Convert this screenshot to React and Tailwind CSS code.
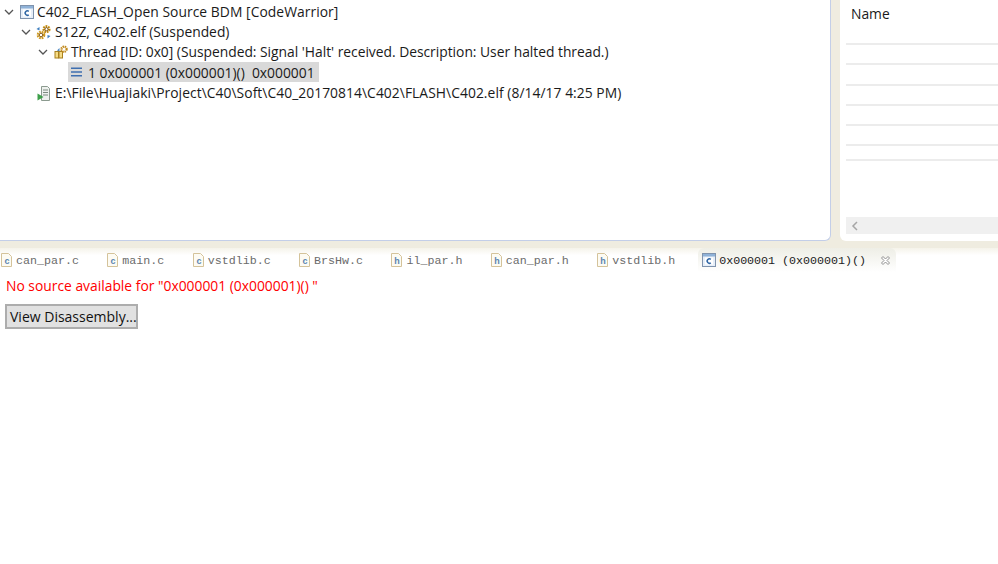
const sans = "font-['Open_Sans','Noto_Sans',sans-serif]";

const Chevron = () => (
  <svg width="10" height="10" viewBox="0 0 10 10" className="shrink-0">
    <path d="M1 3l4 4 4-4" fill="none" stroke="#555" strokeWidth="1.3" />
  </svg>
);

const ProjectIcon = () => (
  <svg width="14" height="14" viewBox="0 0 14 14" className="shrink-0">
    <rect x="0.5" y="0.5" width="13" height="13" fill="#e6eef8" stroke="#7f93ad" />
    <rect x="1" y="1" width="12" height="2.5" fill="#8fb2d8" />
    <rect x="3" y="4.5" width="8" height="7" fill="#fff" />
    <path d="M8.8 6.4A2.2 2.2 0 1 0 8.8 9.8" fill="none" stroke="#2f66a5" strokeWidth="1.5" />
  </svg>
);

const Gear = ({ cx, cy, r }) => (
  <g>
    <circle cx={cx} cy={cy} r={r} fill="none" stroke="#cf9a1e" strokeWidth="2.6" strokeDasharray="1.6 0.8" />
    <circle cx={cx} cy={cy} r={r - 1.2} fill="none" stroke="#7a4f10" strokeWidth="0.9" />
    <circle cx={cx} cy={cy} r={r + 1} fill="none" stroke="#7a4f10" strokeWidth="0.5" strokeDasharray="1.2 1.2" />
  </g>
);

const GearsIcon = () => (
  <svg width="15" height="15" viewBox="0 0 15 15" className="shrink-0 ml-[-1px] mr-px">
    <Gear cx="10.5" cy="4.2" r="2.8" />
    <Gear cx="5" cy="10" r="3" />
    <path d="M.5 4l3-2v3.5zM14.5 11l-3 2.5V10z" fill="#3f7fbf" />
  </svg>
);

const ThreadIcon = () => (
  <svg width="14" height="14" viewBox="0 0 14 14" className="shrink-0">
    <rect x="1" y="6.5" width="3.5" height="6.5" fill="#f6dc86" stroke="#a8801f" />
    <rect x="5" y="6.5" width="3.5" height="6.5" fill="#f6dc86" stroke="#a8801f" />
    <circle cx="10" cy="4.2" r="2.6" fill="none" stroke="#c0881a" strokeWidth="2.2" strokeDasharray="1.4 0.7" />
    <path d="M3 5.5l2.5-2.5v3.5z" fill="#4a86c0" />
  </svg>
);

const FrameIcon = () => (
  <svg width="11" height="10" viewBox="0 0 11 10" className="shrink-0">
    <path d="M0 1.2h11M0 5h11M0 8.8h11" stroke="#3f6fb0" strokeWidth="1.6" />
  </svg>
);

const ElfIcon = () => (
  <svg width="13" height="15" viewBox="0 0 13 15" className="shrink-0">
    <path d="M4.5.5h6l2 2v12h-8z" fill="#eef1ee" stroke="#8b9a8f" />
    <path d="M6 4h5M6 6.5h5M6 9h5" stroke="#7c8a80" />
    <path d="M0.5 7.5l6 3.5-6 3.5z" fill="#3ea04a" />
  </svg>
);

const FileIcon = ({ letter }) => (
  <svg width="11" height="14" viewBox="0 0 11 14" className="shrink-0">
    <path d="M.5.5h7l3 3v10H.5z" fill="#fdfbf3" stroke="#d4c39a" />
    <text x="6" y="10.5" textAnchor="middle" fontSize="9" fontWeight="700" fill="#5b84b1" fontFamily="'Liberation Sans', sans-serif">
      {letter}
    </text>
  </svg>
);

const tabs = [
  ['can_par.c', 'c'],
  ['main.c', 'c'],
  ['vstdlib.c', 'c'],
  ['BrsHw.c', 'c'],
  ['il_par.h', 'h'],
  ['can_par.h', 'h'],
  ['vstdlib.h', 'h'],
];

const lineGaps = ['h-[45px]', 'h-[20px]', 'h-[21px]', 'h-[20px]', 'h-[20px]', 'h-[20px]', 'h-[15px]'];

const App = () => {
  return (
    <div className={`w-[998px] h-[564px] overflow-hidden bg-white text-[#1a1a1a] ${sans}`}>
      <div className="h-[248px] bg-[#efece0] flex gap-[9px]">
        <div className="w-[831px] h-[241px] bg-white border-r border-b border-[#c3cee8] rounded-br-[6px] pt-[2px] text-[13.85px] leading-[20px]">
          <div className="h-[20px] flex items-center pl-[4px] gap-[6px]">
            <Chevron />
            <ProjectIcon />
            <span className="ml-[-3px] tracking-[0.05px]">C402_FLASH_Open Source BDM [CodeWarrior]</span>
          </div>
          <div className="h-[20px] flex items-center pl-[21px] gap-[6px]">
            <Chevron />
            <GearsIcon />
            <span className="ml-[-3px]">S12Z, C402.elf (Suspended)</span>
          </div>
          <div className="h-[20px] flex items-center pl-[38px] gap-[6px]">
            <Chevron />
            <ThreadIcon />
            <span className="ml-[-3px] tracking-[-0.02px]">Thread [ID: 0x0] (Suspended: Signal 'Halt' received. Description: User halted thread.)</span>
          </div>
          <div className="h-[20px] flex items-center pl-[68px]">
            <div className="h-[20px] w-[251px] bg-[#d9d9d9] flex items-center pl-[3px] gap-[6px]">
              <FrameIcon />
              <span className="whitespace-pre pt-px">1 0x000001 (0x000001)()  0x000001</span>
            </div>
          </div>
          <div className="h-[20px] flex items-center pl-[37px] gap-[5px] pt-[2px]">
            <ElfIcon />
            <span className="tracking-[0.05px]">E:\File\Huajiaki\Project\C40\Soft\C40_20170814\C402\FLASH\C402.elf (8/14/17 4:25 PM)</span>
          </div>
        </div>

        <div className="flex-1 h-[241px] bg-white rounded-bl-[6px] pl-[6px] flex flex-col">
          {lineGaps.map((gap, i) => (
            <div key={i} className={`${gap} shrink-0 border-b-2 border-[#ececec] pl-[5px] text-[13.85px] leading-[28px]`}>
              {i === 0 ? 'Name' : ''}
            </div>
          ))}
          <div className="mt-[56px] h-[17px] bg-[#f0f0f0] flex items-center pl-[5px]">
            <svg width="8" height="10" viewBox="0 0 8 10">
              <path d="M6 1L2 5l4 4" fill="none" stroke="#a6a6a6" strokeWidth="1.5" />
            </svg>
          </div>
        </div>
      </div>

      <div className="h-[24px] flex items-start bg-gradient-to-b from-[#f5f3ea] to-white to-30% pl-px font-['Liberation_Mono',monospace] text-[11.67px] leading-[24px] text-[#6b6b6b]">
        <div className="flex items-center gap-[28.4px] h-[24px]">
          {tabs.map(([name, kind]) => (
            <div key={name} className="flex items-center gap-[4px]">
              <FileIcon letter={kind} />
              <span className="pt-[2px]">{name}</span>
            </div>
          ))}
        </div>
        <div className="ml-[23px] w-[198px] h-[24px] flex items-center pl-[4px] rounded-t-[6px] bg-gradient-to-b from-[#eeeee6] to-white text-[#222]">
          <ProjectIcon />
          <span className="ml-[3px] pt-[2px] whitespace-pre">0x000001 (0x000001)()</span>
          <svg width="11" height="11" viewBox="0 0 11 11" className="ml-[14px]">
            <path d="M1.5 3L3 1.5l2.5 2.5L8 1.5 9.5 3 7 5.5 9.5 8 8 9.5 5.5 7 3 9.5 1.5 8 4 5.5z" stroke="#8f8f8f" fill="#fff" />
          </svg>
        </div>
      </div>

      <div className="px-[6px] pt-[4px]">
        <p className="text-[13.85px] leading-[20px] text-[#ff0000]">No source available for "0x000001 (0x000001)() "</p>
        <button className="mt-[8px] ml-[-1px] w-[133px] h-[25px] bg-[#e1e1e1] border-2 border-[#adadad] text-[14px] leading-none text-left pl-[3px] whitespace-nowrap text-[#111]">
          View Disassembly...
        </button>
      </div>
    </div>
  );
};

export default App;
